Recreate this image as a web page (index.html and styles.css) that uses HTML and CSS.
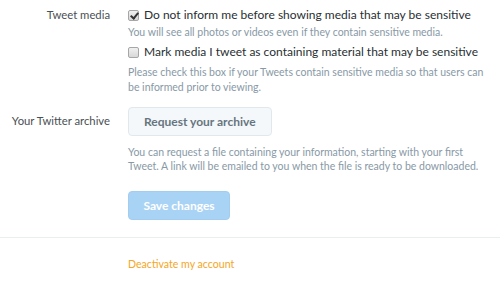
FILE: index.html
```html
<!DOCTYPE html>
<html lang="en">
<head>
    <meta charset="UTF-8">
    <title>Account settings</title>
    <link rel="stylesheet" href="styles.css">
</head>
<body>
    <div class="settings">
        <div class="row row-media">
            <div class="label">Tweet media</div>
            <div class="controls">
                <label class="check">
                    <input type="checkbox" checked>
                    <span>Do not inform me before showing media that may be sensitive</span>
                </label>
                <p class="hint hint-first">You will see all photos or videos even if they contain sensitive media.</p>
                <label class="check">
                    <input type="checkbox">
                    <span>Mark media I tweet as containing material that may be sensitive</span>
                </label>
                <p class="hint hint-second">Please check this box if your Tweets contain sensitive media so that users can be informed prior to viewing.</p>
            </div>
        </div>

        <div class="row row-archive">
            <div class="label">Your Twitter archive</div>
            <div class="controls">
                <button class="btn">Request your archive</button>
                <p class="hint hint-archive">You can request a file containing your information, starting with your first Tweet. A link will be emailed to you when the file is ready to be downloaded.</p>
            </div>
        </div>

        <div class="row row-save">
            <div class="label"></div>
            <div class="controls">
                <button class="btn btn-primary" disabled>Save changes</button>
            </div>
        </div>
    </div>

    <div class="footer">
        <a href="#" class="deactivate">Deactivate my account</a>
    </div>
</body>
</html>
```

FILE: styles.css
```css
body {
    margin: 0;
    font-family: Lato, "Liberation Sans", sans-serif;
    background-color: #fff;
    color: #292f33;
}
.settings {
    padding-top: 7px;
}
.row {
    display: grid;
    grid-template-columns: 110px 1fr;
    column-gap: 18px;
}
.label {
    text-align: right;
    font-size: 11.3px;
    color: #4a4f54;
    line-height: 16px;
}
.controls {
    display: flex;
    flex-direction: column;
    align-items: flex-start;
    padding-right: 12px;
}
.check {
    display: flex;
    align-items: center;
    font-size: 12px;
    line-height: 16px;
}
.check input {
    appearance: none;
    -webkit-appearance: none;
    margin: 0 5px 0 0;
    width: 11px;
    height: 11px;
    border: 1px solid #a6a6a6;
    border-radius: 2px;
    background: linear-gradient(#f0f0f0, #d8d8d8);
    box-sizing: border-box;
    position: relative;
}
.check input:checked::after {
    content: "";
    position: absolute;
    left: 3px;
    top: 0px;
    width: 3px;
    height: 6px;
    border: solid #333;
    border-width: 0 2px 2px 0;
    transform: rotate(40deg);
}
.hint {
    font-size: 10.5px;
    line-height: 15px;
    color: #8899a6;
    margin: 0;
}
.hint-first {
    margin: 2px 0 4px;
}
.hint-second {
    margin-top: 5px;
}
.btn {
    font-family: inherit;
    font-size: 12px;
    font-weight: bold;
    color: #66757f;
    background-color: #f5f8fa;
    border: 1px solid #e1e8ed;
    border-radius: 4px;
    height: 29px;
    padding: 0 15px;
}
.row-archive {
    margin-top: 12px;
}
.row-archive .label {
    padding-top: 6px;
}
.hint-archive {
    margin-top: 9px;
    line-height: 14px;
}
.row-save {
    margin-top: 18px;
}
.btn-primary {
    background-color: #a9d3f5;
    border-color: #a3cdf0;
    color: #fff;
    width: 102px;
    padding: 0;
}
.footer {
    margin-top: 17px;
    border-top: 1px solid #e9eef1;
    padding: 17px 0 0 128px;
    line-height: 14px;
}
.deactivate {
    font-size: 10.6px;
    color: #f5a623;
    text-decoration: none;
}
```
